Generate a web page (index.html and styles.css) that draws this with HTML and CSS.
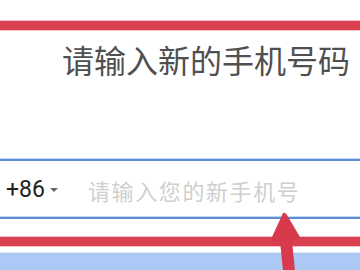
FILE: index.html
```html
<!DOCTYPE html>
<html lang="zh-CN">
<head>
<meta charset="utf-8">
<link rel="stylesheet" href="styles.css">
</head>
<body>
<div class="page">
  <div class="top-space"></div>
  <div class="red-band"></div>
  <h1 class="title">请输入新的手机号码</h1>
  <div class="blue-line"></div>
  <div class="input-row">
    <div class="country">+86<span class="caret"></span></div>
    <div class="placeholder">请输入您的新手机号</div>
  </div>
  <div class="blue-line"></div>
  <div class="gap-a"></div>
  <div class="red-band"></div>
  <div class="gap-b"></div>
  <div class="blue-block"></div>
  <svg class="arrow" width="40" height="60" viewBox="0 0 40 60">
    <path d="M23 1 Q25 0 27 3 L40 25 Q41 28 37 28 L32 29 L35 59 L23 59 L20 29 L14 29 Q10 29 12 25 Z" fill="#d63a4c"/>
  </svg>
</div>
</body>
</html>
```
FILE: styles.css
```css
html, body {
  margin: 0;
  padding: 0;
  background: #ffffff;
}
.page {
  position: relative;
  width: 360px;
  height: 270px;
  overflow: hidden;
  font-family: "Noto Sans CJK SC", "Noto Sans", sans-serif;
}
.top-space {
  height: 20px;
}
.red-band {
  height: 9px;
  background: #d8404f;
  border-top: 1px solid #f3c1c7;
  border-bottom: 1px solid #f3c1c7;
}
.title {
  margin: 0;
  height: 127px;
  padding: 10px 0 0 62px;
  box-sizing: border-box;
  font-size: 32px;
  line-height: 36px;
  font-weight: normal;
  color: #505050;
  white-space: nowrap;
}
.blue-line {
  height: 2px;
  background: #5a8dd6;
  border-top: 1px solid #c3daf5;
}
.input-row {
  height: 55px;
  display: flex;
  align-items: center;
  padding-left: 6px;
  padding-top: 2px;
  box-sizing: border-box;
}
.country {
  display: flex;
  align-items: center;
  font-family: "Roboto", "Liberation Sans", sans-serif;
  font-size: 23px;
  color: #222222;
  width: 82px;
}
.caret {
  width: 0;
  height: 0;
  margin-left: 5px;
  margin-top: 1px;
  border-left: 4.5px solid transparent;
  border-right: 4.5px solid transparent;
  border-top: 4px solid #666666;
}
.placeholder {
  font-size: 22px;
  color: #cfcfcf;
  letter-spacing: 1.6px;
}
.gap-a {
  height: 17px;
}
.gap-b {
  height: 5px;
  border-bottom: 1px solid #dbe7f8;
}
.blue-block {
  height: 18px;
  background: #abc9f4;
}
.arrow {
  position: absolute;
  left: 260px;
  top: 212px;
}
```
